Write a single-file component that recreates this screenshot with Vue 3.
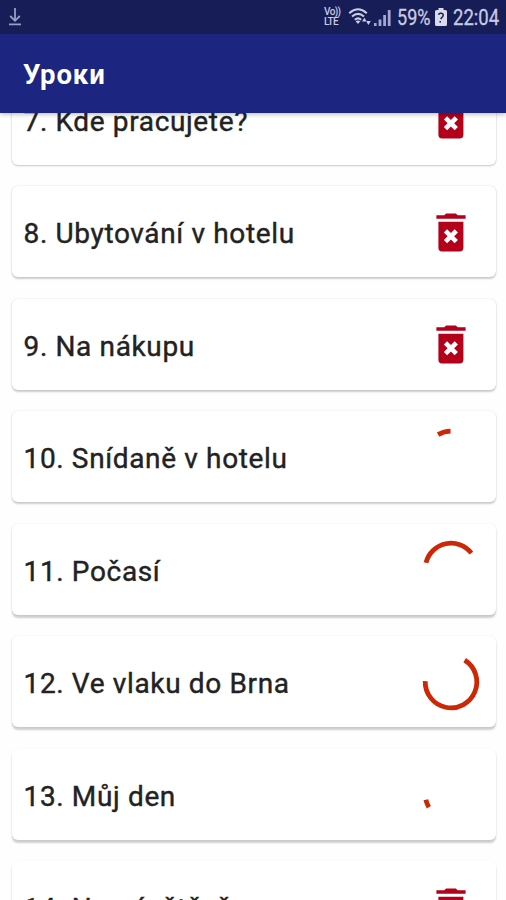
<template>
  <div class="screen">
    <div class="status-bar">
      <svg class="status-download" width="14" height="18" viewBox="0 0 14 18">
        <path d="M7 0V13M2.2 8L7 12.8L11.8 8M1 16.4H13" />
      </svg>
      <div class="status-icons">
        <div class="volte"><span>Vo))</span><span>LTE</span></div>
        <svg class="wifi" width="24" height="18" viewBox="0 0 24 18">
          <path d="M1.2 5.2Q10 -2.6 18.8 5.2M4 8.6Q10 3.2 16 8.6M6.8 11.8Q10 9 13.2 11.8" />
          <path class="solid" d="M7.6 13.2Q10 11.6 12.4 13.2L10 16ZM14 13.6L16.4 9.8L18.8 13.6ZM18 13L20.4 17L22.8 13Z" />
        </svg>
        <svg class="signal" width="17" height="17" viewBox="0 0 17 17">
          <path d="M0 14H2.6V17H0ZM4.6 10.5H7.4V17H4.6ZM9.2 6H12V17H9.2ZM13.8 1H16.6V17H13.8Z" />
        </svg>
        <span class="percent">59%</span>
        <svg class="battery" width="12" height="18" viewBox="0 0 12 18">
          <path d="M3.5 0H8.5V2H10.5Q12 2 12 3.5V16.5Q12 18 10.5 18H1.5Q0 18 0 16.5V3.5Q0 2 1.5 2H3.5Z" />
          <path class="mark" d="M3.5 6.8Q4.2 4.8 6.2 5.2Q9.2 5.8 7.8 8.4L5.6 11M5.2 13V14.6" />
        </svg>
        <span class="clock">22:04</span>
      </div>
    </div>

    <header class="app-bar">
      <h1>Уроки</h1>
    </header>

    <main class="lessons">
      <div
        v-for="lesson in lessons"
        :key="lesson.id"
        class="lesson"
        :style="{ '--depth': lesson.depth }"
      >
        <span class="lesson-title">{{ lesson.id }}. {{ lesson.title }}</span>
        <svg v-if="lesson.arc" class="spinner" viewBox="-30 -30 60 60">
          <path :d="arcPath(lesson.arc)" />
        </svg>
        <svg v-else class="trash" viewBox="0 0 30 39">
          <path d="M0.4 2.2H8.2L10.2 0.4H19.8L21.8 2.2H29.6V5.8H0.4Z" />
          <path d="M2.4 8.8H27.4V34.8Q27.4 38.4 23.8 38.4H6Q2.4 38.4 2.4 34.8Z" />
          <path class="cross" d="M9.5 17.8L20.3 28.6M20.3 17.8L9.5 28.6" />
        </svg>
      </div>
    </main>
  </div>
</template>

<script setup>
// arc: start and end angle of the progress ring, in degrees
const lessons = [
  { id: 7, title: 'Kde pracujete?', depth: 0 },
  { id: 8, title: 'Ubytování v hotelu', depth: 1 },
  { id: 9, title: 'Na nákupu', depth: 2 },
  { id: 10, title: 'Snídaně v hotelu', depth: 3, arc: [-120, -91] },
  { id: 11, title: 'Počasí', depth: 4, arc: [-166, -38] },
  { id: 12, title: 'Ve vlaku do Brna', depth: 5, arc: [-58, 182] },
  { id: 13, title: 'Můj den', depth: 6, arc: [149, 167] },
  { id: 14, title: 'Na návštěvě', depth: 7 },
];

const RADIUS = 25.8;

const point = (deg) => {
  const rad = (deg * Math.PI) / 180;
  return `${(RADIUS * Math.cos(rad)).toFixed(2)} ${(RADIUS * Math.sin(rad)).toFixed(2)}`;
};

const arcPath = ([from, to]) => {
  const large = to - from > 180 ? 1 : 0;
  return `M${point(from)}A${RADIUS} ${RADIUS} 0 ${large} 1 ${point(to)}`;
};
</script>

<style>
body {
  margin: 0;
  background: #fefefe;
}
</style>

<style scoped>
.screen {
  width: 506px;
  height: 900px;
  display: flex;
  flex-direction: column;
  overflow: hidden;
  background: #fefefe;
  font-family: Roboto, "Liberation Sans", sans-serif;
}

.status-bar {
  flex: none;
  height: 34px;
  box-sizing: border-box;
  padding: 0 7px 0 8px;
  display: flex;
  align-items: center;
  justify-content: space-between;
  background: #171d57;
  color: #c9cbe0;
  z-index: 2;
}
.status-download {
  fill: none;
  stroke: #9a9dc4;
  stroke-width: 1.8;
}
.status-icons {
  display: flex;
  align-items: center;
}
.volte {
  display: flex;
  flex-direction: column;
  width: 18px;
  margin-right: 6px;
  font-size: 10px;
  font-weight: 500;
  line-height: 10px;
  letter-spacing: -0.6px;
}
.wifi {
  fill: none;
  stroke: #c9cbe0;
  stroke-width: 2;
  margin-right: 2px;
}
.wifi .solid {
  fill: #c9cbe0;
  stroke: none;
}
.signal {
  fill: #a4a7cb;
  margin-right: 6px;
}
.percent,
.clock {
  padding-top: 1px;
  font-size: 22px;
  line-height: 33px;
  white-space: nowrap;
  transform-origin: left center;
  -webkit-text-stroke: 0.3px #c9cbe0;
}
.percent {
  width: 33px;
  margin-right: 5px;
  transform: scaleX(0.82);
}
.clock {
  width: 46px;
  transform: scaleX(0.84);
}
.battery {
  fill: #d9daea;
  margin-right: 6px;
}
.battery .mark {
  fill: none;
  stroke: #171d57;
  stroke-width: 1.5;
}

.app-bar {
  flex: none;
  height: 79px;
  box-sizing: border-box;
  padding: 2px 0 0 23px;
  display: flex;
  align-items: center;
  background: #1c257f;
  box-shadow: 0 1px 5px rgba(0, 0, 0, 0.3);
  z-index: 1;
}
.app-bar h1 {
  margin: 0;
  color: #fff;
  font-size: 27.5px;
  font-weight: 700;
  line-height: 32px;
  letter-spacing: 0.9px;
}

/* The list is scrolled, its first card slides under the app bar */
.lessons {
  display: flex;
  flex-direction: column;
  gap: 21.5px;
  margin-top: -39.2px;
  padding: 0 10px 0 11.5px;
}
.lesson {
  flex: none;
  height: 91px;
  box-sizing: border-box;
  padding: 0 15.5px 0 12px;
  display: flex;
  align-items: center;
  justify-content: space-between;
  border-radius: 6px;
  background: #fff;
  box-shadow:
    0 0 2px rgba(0, 0, 0, calc(0.13 - var(--depth) * 0.012)),
    0 calc(1px + var(--depth) * 0.3px) 2px rgba(0, 0, 0, 0.19);
}
.lesson-title {
  padding-top: 5px;
  color: #222;
  font-size: 28px;
  font-weight: 400;
  line-height: 34px;
  letter-spacing: 0.64px;
  white-space: nowrap;
  -webkit-text-stroke: 0.4px #222;
}
.spinner {
  width: 60px;
  height: 60px;
  fill: none;
  stroke: #cc2706;
  stroke-width: 4.8;
}
.trash {
  width: 30px;
  height: 39px;
  margin: 1px 15px 0 0;
  fill: #b3001b;
}
.trash .cross {
  fill: none;
  stroke: #fff;
  stroke-width: 4.6;
}
</style>
